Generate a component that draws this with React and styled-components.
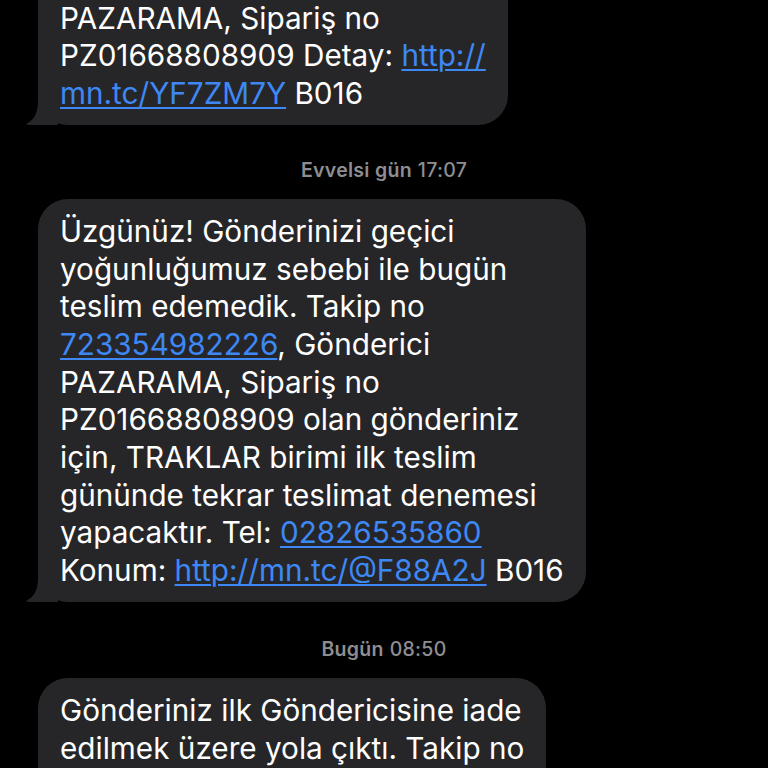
import React from "react";
import styled, { createGlobalStyle } from "styled-components";

const Global = createGlobalStyle`
  html, body { margin: 0; padding: 0; background: #000; }
  body { font-family: Inter, "Noto Sans", "Liberation Sans", sans-serif; overflow: hidden; }
`;

const Thread = styled.div`
  display: flex;
  flex-direction: column;
  align-items: flex-start;
  margin-top: -52px;
  width: 768px;
  height: 820px;
  overflow: hidden;
`;

const Stamp = styled.div`
  align-self: stretch;
  text-align: center;
  color: #8e8e92;
  font-size: 19.5px;
  letter-spacing: 0.3px;
  line-height: 22px;
  margin: ${(p) => p.$top}px 0 18px;
  b { font-weight: 600; }
  span { font-weight: 500; }
`;

const Bubble = styled.div`
  position: relative;
  margin-left: 38px;
  background: #262628;
  color: #fff;
  border-radius: 30px;
  padding: 14px 22px 12px 22px;
  font-size: 29.7px;
  line-height: 37.7px;
  white-space: nowrap;
`;

const Tail = styled.svg`
  position: absolute;
  left: -12px;
  bottom: 0;
  width: 32px;
  height: 32px;
`;

const Link = styled.a`
  color: #3e88f5;
  text-decoration: underline;
  text-decoration-thickness: 2px;
  text-underline-offset: 3px;
`;

const BubbleTail = () => (
  <Tail viewBox="0 0 32 32">
    <path d="M12 0 H32 V32 H6 C3 32 1 31.6 0 31 C8 27 12 20 12 8 Z" fill="#262628" />
  </Tail>
);

export default function App() {
  return (
    <>
      <Global />
      <Thread>
        <Bubble>
          <BubbleTail />
          <Link>723354982226</Link>, Gönderici
          <br />PAZARAMA, Sipariş no
          <br />PZ01668808909 Detay: <Link>http://</Link>
          <br /><Link>mn.tc/YF7ZM7Y</Link> B016
        </Bubble>
        <Stamp $top={34}>
          <b>Evvelsi gün</b> <span>17:07</span>
        </Stamp>
        <Bubble>
          <BubbleTail />
          Üzgünüz! Gönderinizi geçici
          <br />yoğunluğumuz sebebi ile bugün
          <br />teslim edemedik. Takip no
          <br /><Link>723354982226</Link>, Gönderici
          <br />PAZARAMA, Sipariş no
          <br />PZ01668808909 olan gönderiniz
          <br />için, TRAKLAR birimi ilk teslim
          <br />gününde tekrar teslimat denemesi
          <br />yapacaktır. Tel: <Link>02826535860</Link>
          <br />Konum: <Link>http://mn.tc/@F88A2J</Link> B016
        </Bubble>
        <Stamp $top={36}>
          <b>Bugün</b> <span>08:50</span>
        </Stamp>
        <Bubble>
          Gönderiniz ilk Göndericisine iade
          <br />edilmek üzere yola çıktı. Takip no
          <br /><Link>723354982226</Link>, Gönderici
        </Bubble>
      </Thread>
    </>
  );
}
